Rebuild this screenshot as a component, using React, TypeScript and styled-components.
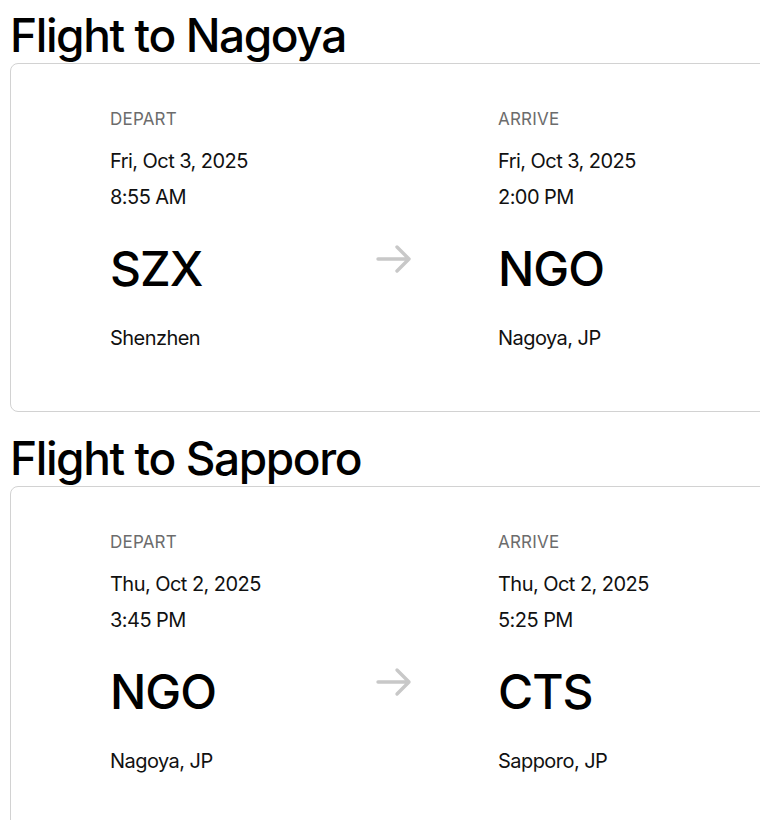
import styled, { createGlobalStyle } from "styled-components";

const GlobalStyle = createGlobalStyle`
  html, body {
    margin: 0;
    overflow: hidden;
    background: #ffffff;
  }
  body {
    font-family: Inter, "Noto Sans", sans-serif;
    color: #000000;
  }
`;

type Endpoint = {
  label: string;
  date: string;
  time: string;
  code: string;
  city: string;
};

type Flight = {
  title: string;
  depart: Endpoint;
  arrive: Endpoint;
};

const flights: Flight[] = [
  {
    title: "Flight to Nagoya",
    depart: {
      label: "DEPART",
      date: "Fri, Oct 3, 2025",
      time: "8:55 AM",
      code: "SZX",
      city: "Shenzhen",
    },
    arrive: {
      label: "ARRIVE",
      date: "Fri, Oct 3, 2025",
      time: "2:00 PM",
      code: "NGO",
      city: "Nagoya, JP",
    },
  },
  {
    title: "Flight to Sapporo",
    depart: {
      label: "DEPART",
      date: "Thu, Oct 2, 2025",
      time: "3:45 PM",
      code: "NGO",
      city: "Nagoya, JP",
    },
    arrive: {
      label: "ARRIVE",
      date: "Thu, Oct 2, 2025",
      time: "5:25 PM",
      code: "CTS",
      city: "Sapporo, JP",
    },
  },
];

const ArrowIcon = () => (
  <svg width="36" height="30" viewBox="0 0 36 30" fill="none">
    <path
      d="M2 15h31M21 3l12 12-12 12"
      stroke="#c8c8c8"
      strokeWidth="3.4"
      strokeLinecap="round"
      strokeLinejoin="round"
    />
  </svg>
);

const EndpointBlock = ({ data }: { data: Endpoint }) => (
  <Column>
    <Label>{data.label}</Label>
    <DateText>{data.date}</DateText>
    <TimeText>{data.time}</TimeText>
    <Code>{data.code}</Code>
    <City>{data.city}</City>
  </Column>
);

const App = () => {
  return (
    <>
      <GlobalStyle />
      <Page>
        {flights.map((f) => (
          <Section key={f.title}>
            <Title>{f.title}</Title>
            <Card>
              <EndpointBlock data={f.depart} />
              <ArrowCell>
                <ArrowIcon />
              </ArrowCell>
              <EndpointBlock data={f.arrive} />
            </Card>
          </Section>
        ))}
      </Page>
    </>
  );
};

const Page = styled.div`
  padding: 7px 0 0 10px;
  display: flex;
  flex-direction: column;
  gap: 18px;
`;

const Section = styled.section`
  display: flex;
  flex-direction: column;
`;

const Title = styled.h1`
  margin: 0;
  font-size: 46px;
  font-weight: 500;
  letter-spacing: -1.4px;
  line-height: normal;
`;

const Card = styled.div`
  width: 880px;
  border: 1px solid #d2d2d2;
  border-radius: 8px;
  padding: 45px 0 59px 99px;
  display: grid;
  grid-template-columns: 268px 120px 1fr;
  align-items: start;
`;

const Column = styled.div`
  display: flex;
  flex-direction: column;
`;

const ArrowCell = styled.div`
  margin-top: 135px;
  margin-left: -2px;
`;

const Label = styled.div`
  font-size: 17px;
  line-height: 20px;
  color: #6c6c6c;
  letter-spacing: 0.2px;
`;

const DateText = styled.div`
  margin-top: 18px;
  font-size: 20px;
  line-height: 28px;
  letter-spacing: -0.55px;
  color: #111111;
`;

const TimeText = styled(DateText)`
  margin-top: 8px;
`;

const Code = styled.div`
  margin-top: 29px;
  font-size: 48px;
  line-height: 58px;
  font-weight: 500;
  letter-spacing: -1px;
`;

const City = styled.div`
  margin-top: 26px;
  font-size: 20px;
  line-height: 28px;
  letter-spacing: -0.55px;
  color: #111111;
`;

export default App;
